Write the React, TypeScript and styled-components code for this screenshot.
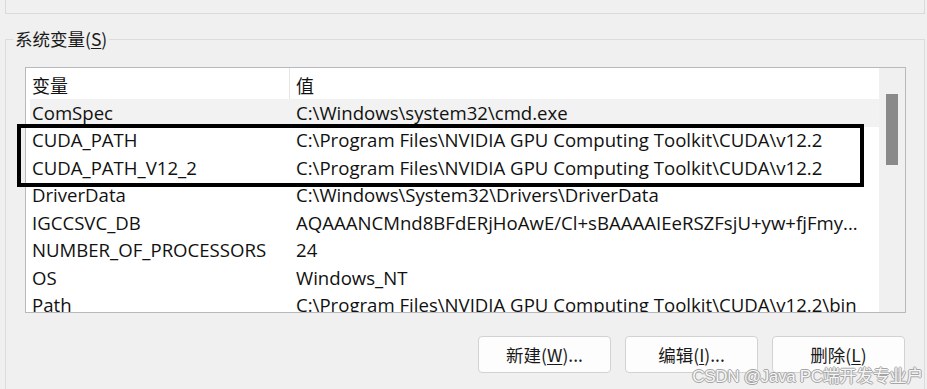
import React from 'react';
import styled, { createGlobalStyle } from 'styled-components';

const GlobalStyle = createGlobalStyle`
  html, body {
    margin: 0;
    padding: 0;
    background: #f0f0f0;
  }
  body {
    font-family: "Open Sans", "Noto Sans CJK SC", sans-serif;
    color: #111;
  }
`;

const Page = styled.div`
  position: relative;
  width: 927px;
  height: 389px;
  overflow: hidden;
  background: #f0f0f0;
`;

const UpperGroup = styled.div`
  margin-left: 5px;
  width: 920px;
  height: 15px;
  margin-top: -1px;
  box-sizing: border-box;
  border: 1px solid #dadada;
  border-top: none;
`;

const Group = styled.fieldset`
  margin: 14px 0 0 5px;
  width: 920px;
  min-height: 420px;
  box-sizing: border-box;
  border: 1px solid #dcdcdc;
  border-bottom: none;
  padding: 0;
`;

const Legend = styled.legend`
  margin-left: 7px;
  padding: 0 2px 0 2px;
  font-family: "Noto Sans CJK SC", "Open Sans", sans-serif;
  font-size: 17.5px;
  line-height: 22px;
  color: #1a1a1a;

  u {
    text-decoration-thickness: 1px;
    text-underline-offset: 2px;
  }
`;

const ListBox = styled.div`
  margin: 17px 0 0 19px;
  width: 881px;
  height: 246px;
  box-sizing: border-box;
  border: 1px solid #b9b9bd;
  background: #fff;
  display: grid;
  grid-template-columns: 1fr 26px;
  overflow: hidden;
`;

const Table = styled.div`
  display: flex;
  flex-direction: column;
  overflow: hidden;
`;

const HeaderRow = styled.div`
  display: grid;
  grid-template-columns: 260px 1fr;
  height: 31px;
  flex: none;
  margin-left: 4px;
  font-family: "Noto Sans CJK SC", "Open Sans", sans-serif;
  font-size: 18px;
`;

const HeaderCell = styled.div<{ $first?: boolean }>`
  display: flex;
  align-items: center;
  padding: 2px 0 0 ${p => (p.$first ? '2px' : '6px')};
  border-right: ${p => (p.$first ? '1px solid #e5e5e5' : 'none')};
`;

const Row = styled.div<{ $selected?: boolean }>`
  display: grid;
  grid-template-columns: 264px 1fr;
  height: 27.5px;
  flex: none;
  margin-left: 4px;
  align-items: center;
  background: ${p => (p.$selected ? '#f2f2f2' : 'transparent')};
  font-size: 18.6px;
  line-height: 24px;
  white-space: nowrap;
`;

const Cell = styled.div`
  padding-left: 2px;
  overflow: hidden;
`;

const ScrollTrack = styled.div`
  background: #f0f0f0;
  display: flex;
  justify-content: center;
  padding-top: 26px;
`;

const ScrollThumb = styled.div`
  width: 12px;
  height: 71px;
  background: #8a8a8a;
`;

const Buttons = styled.div`
  width: 880px;
  margin: 23px 0 0 19px;
  display: flex;
  justify-content: flex-end;
  gap: 14px;
`;

const Button = styled.button`
  width: 133px;
  height: 37px;
  box-sizing: border-box;
  background: #fdfdfd;
  border: 1px solid #d2d2d2;
  border-radius: 4px;
  font-family: "Noto Sans CJK SC", "Open Sans", sans-serif;
  font-size: 17.5px;
  color: #1a1a1a;
  padding: 0;

  u {
    text-underline-offset: 2px;
  }
`;

const Highlight = styled.div`
  position: absolute;
  left: 17px;
  top: 124px;
  width: 847px;
  height: 63px;
  box-sizing: border-box;
  border: 4px solid #000;
  pointer-events: none;
`;

const Watermark = styled.div`
  position: absolute;
  right: 4px;
  top: 366px;
  font-family: "Liberation Sans", "Noto Sans CJK SC", sans-serif;
  font-size: 17px;
  line-height: 22px;
  letter-spacing: -0.3px;
  white-space: nowrap;
  color: #f6f6f6;
  text-shadow: -1px 0 #a5a5a5, 1px 0 #a5a5a5, 0 -1px #a5a5a5, 0 1px #a5a5a5;
`;

const vars: [string, string][] = [
  ['ComSpec', 'C:\\Windows\\system32\\cmd.exe'],
  ['CUDA_PATH', 'C:\\Program Files\\NVIDIA GPU Computing Toolkit\\CUDA\\v12.2'],
  ['CUDA_PATH_V12_2', 'C:\\Program Files\\NVIDIA GPU Computing Toolkit\\CUDA\\v12.2'],
  ['DriverData', 'C:\\Windows\\System32\\Drivers\\DriverData'],
  ['IGCCSVC_DB', 'AQAAANCMnd8BFdERjHoAwE/Cl+sBAAAAIEeRSZFsjU+yw+fjFmy...'],
  ['NUMBER_OF_PROCESSORS', '24'],
  ['OS', 'Windows_NT'],
  ['Path', 'C:\\Program Files\\NVIDIA GPU Computing Toolkit\\CUDA\\v12.2\\bin'],
];

const App: React.FC = () => {
  return (
    <Page>
      <GlobalStyle />
      <UpperGroup />
      <Group>
        <Legend>
          系统变量(<u>S</u>)
        </Legend>
        <ListBox>
          <Table>
            <HeaderRow>
              <HeaderCell $first>变量</HeaderCell>
              <HeaderCell>值</HeaderCell>
            </HeaderRow>
            {vars.map(([name, value], i) => (
              <Row key={name} $selected={i === 0}>
                <Cell>{name}</Cell>
                <Cell>{value}</Cell>
              </Row>
            ))}
          </Table>
          <ScrollTrack>
            <ScrollThumb />
          </ScrollTrack>
        </ListBox>
        <Buttons>
          <Button>
            新建(<u>W</u>)...
          </Button>
          <Button>
            编辑(<u>I</u>)...
          </Button>
          <Button>
            删除(<u>L</u>)
          </Button>
        </Buttons>
      </Group>
      <Highlight />
      <Watermark>CSDN @Java PC端开发专业户</Watermark>
    </Page>
  );
};

export default App;
